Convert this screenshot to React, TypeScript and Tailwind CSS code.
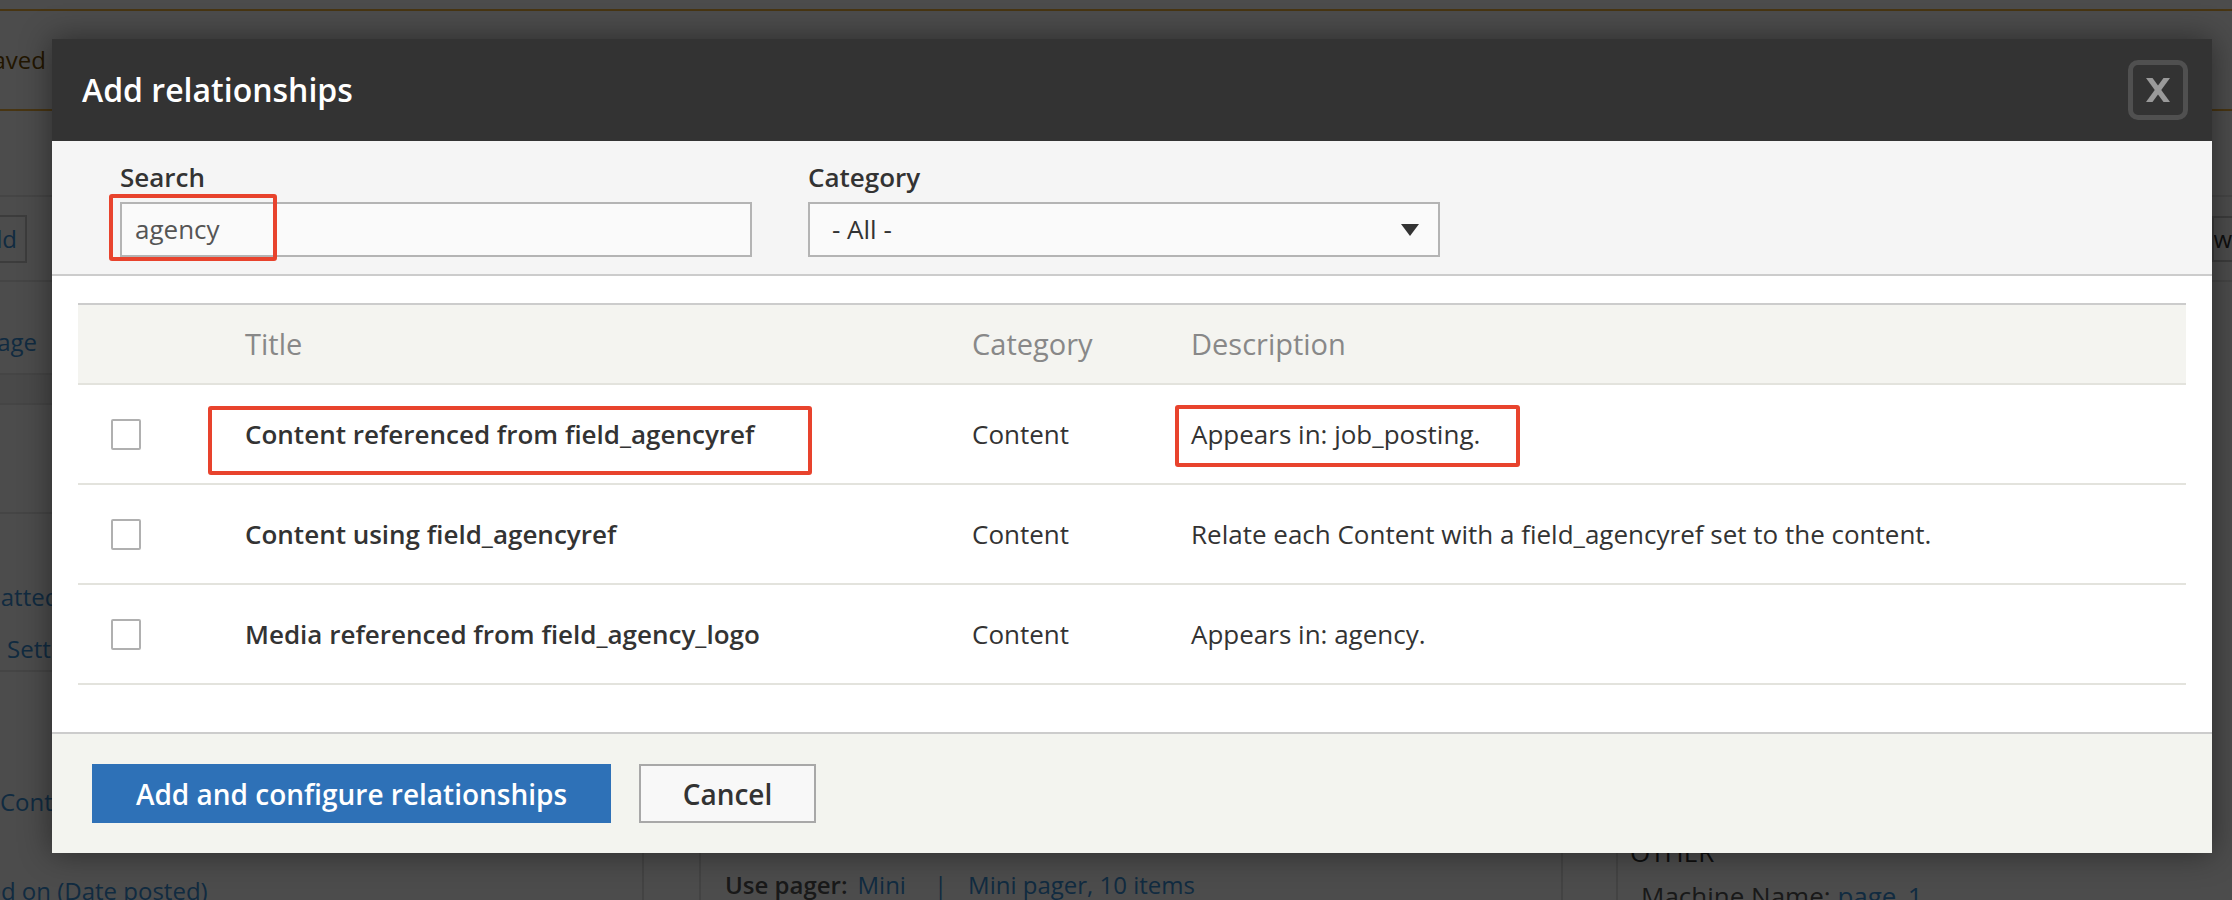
import React from "react";

function Checkbox() {
  return <div className="w-[30px] h-[31px] border-2 border-[#b0b0b0] bg-white rounded-[2px]" />;
}

function RedBox({ className }: { className: string }) {
  return <div className={"absolute border-[4px] border-[#e8432d] rounded-[3px] " + className} />;
}

function BackgroundPage() {
  return (
    <div className="flex flex-col h-full text-[#333]">
      <div className="h-[9px] shrink-0" />
      <div className="h-[102px] shrink-0 border-y-2 border-[#f2b23c] bg-white flex items-center">
        <div className="w-[46px] overflow-hidden flex justify-end shrink-0">
          <span className="whitespace-nowrap text-[24px] text-[#734c00]">been saved</span>
        </div>
      </div>
      <div className="h-[84px] shrink-0" />
      <div className="h-[87px] shrink-0 border-y-2 border-[#e6e6e6] flex items-center justify-between">
        <div className="h-[48px] w-[27px] border-2 border-l-0 border-[#c8c8c8] overflow-hidden flex justify-end items-center pr-[8px]">
          <span className="whitespace-nowrap text-[24px] text-[#3a8fd8]">Add</span>
        </div>
        <div className="h-[46px] w-[20px] border-2 border-r-0 border-[#c8c8c8] overflow-hidden flex justify-end items-center">
          <span className="whitespace-nowrap text-[24px] text-[#333]">Preview</span>
        </div>
      </div>
      <div className="flex flex-1">
        <div className="w-[644px] shrink-0 border-r-2 border-[#e0e0e0] flex flex-col text-[24px] text-[#3a8fd8]">
          <div className="h-[91px] pt-[28px] flex items-center">
            <div className="w-[37px] overflow-hidden flex justify-end">
              <span className="whitespace-nowrap">Page</span>
            </div>
          </div>
          <div className="h-[32px] border-y-2 border-[#e6e6e6] bg-[#f4f4f4]" />
          <div className="h-[109px] border-b-2 border-[#e6e6e6]" />
          <div className="h-[158px] border-b-2 border-[#e6e6e6] pt-[57px] leading-[52px]">
            <div className="whitespace-nowrap -ml-[86px]">Unformatted list</div>
            <div className="whitespace-nowrap ml-[7px]">Settings</div>
          </div>
          <div className="pt-[113px] leading-[34px]">
            <div className="whitespace-nowrap">Content: Title</div>
            <div className="whitespace-nowrap -ml-[90px] mt-[55px]">Authored on (Date posted)</div>
          </div>
        </div>
        <div className="w-[57px] shrink-0 border-r-2 border-[#e0e0e0]" />
        <div className="w-[862px] shrink-0 border-r-2 border-[#e0e0e0] pl-[24px]">
          <div className="mt-[585px] text-[24px] leading-[36px] whitespace-nowrap flex">
            <span className="text-[#555] font-semibold">Use pager:</span>
            <span className="ml-[10px] text-[#3a8fd8]">Mini</span>
            <span className="ml-[28px] text-[#3a8fd8]">|</span>
            <span className="ml-[21px] text-[#3a8fd8]">Mini pager, 10 items</span>
          </div>
        </div>
        <div className="w-[55px] shrink-0 border-r-2 border-[#e0e0e0]" />
        <div className="flex-1 pl-[12px]">
          <div className="mt-[552px] text-[26px] leading-[36px] uppercase text-[#333]">Other</div>
          <div className="mt-[8px] ml-[11px] text-[26px] leading-[36px] whitespace-nowrap">
            <span className="text-[#555]">Machine Name: </span>
            <span className="text-[#3a8fd8]">page_1</span>
          </div>
        </div>
      </div>
    </div>
  );
}

const rows = [
  { title: "Content referenced from field_agencyref", cat: "Content", desc: "Appears in: job_posting.", mark: true },
  { title: "Content using field_agencyref", cat: "Content", desc: "Relate each Content with a field_agencyref set to the content.", mark: false },
  { title: "Media referenced from field_agency_logo", cat: "Content", desc: "Appears in: agency.", mark: false },
];

function Dialog() {
  return (
    <div className="absolute left-[52px] top-[39px] w-[2160px] h-[814px] flex flex-col bg-white shadow-[0_0_30px_rgba(0,0,0,0.45)]">
      <div className="h-[102px] shrink-0 bg-[#333] flex items-center justify-between pl-[30px] pr-[24px]">
        <h2 className="text-[32px] font-semibold text-white leading-none">Add relationships</h2>
        <button className="w-[60px] h-[60px] rounded-[10px] border-[5px] border-[#505050] bg-[#333] flex items-center justify-center">
          <svg width="24" height="24" viewBox="0 0 24 24">
            <polygon points="0,0 6.5,0 24,24 17.5,24" fill="#9a9a9a" />
            <polygon points="17.5,0 24,0 6.5,24 0,24" fill="#9a9a9a" />
          </svg>
        </button>
      </div>

      <div className="h-[135px] shrink-0 bg-[#f5f5f5] border-b-2 border-[#cccccc] flex gap-[56px] pl-[68px] pt-[20px]">
        <div className="flex flex-col">
          <label className="text-[26px] font-semibold text-[#333] leading-[32px] mb-[9px]">Search</label>
          <div className="relative w-[632px] h-[55px] border-2 border-[#b4b4b4] bg-[#fafafa] flex items-center pl-[13px] text-[26px] text-[#555]">
            agency
            <RedBox className="-left-[13px] -top-[10px] w-[168px] h-[67px]" />
          </div>
        </div>
        <div className="flex flex-col">
          <label className="text-[26px] font-semibold text-[#333] leading-[32px] mb-[9px]">Category</label>
          <div className="w-[632px] h-[55px] border-2 border-[#b4b4b4] bg-[#fafafa] flex items-center justify-between pl-[22px] pr-[19px] text-[26px] text-[#333]">
            <span>- All -</span>
            <svg width="18" height="12" viewBox="0 0 18 12">
              <polygon points="0,0 18,0 9,12" fill="#333" />
            </svg>
          </div>
        </div>
      </div>

      <div className="flex-1 bg-white px-[26px] pt-[27px]">
        <div className="h-[82px] border-t-2 border-[#cccccc] border-b-2 border-b-[#e3e3dd] bg-[#f4f4f0] flex items-center text-[29px] text-[#888]">
          <div className="w-[167px] shrink-0" />
          <div className="w-[727px] shrink-0">Title</div>
          <div className="w-[219px] shrink-0">Category</div>
          <div className="flex-1">Description</div>
        </div>
        {rows.map((r, i) => (
          <div key={i} className="h-[100px] border-b-2 border-[#e3e3dd] flex text-[26px] text-[#333]">
            <div className="w-[167px] shrink-0 pl-[33px] flex items-center">
              <Checkbox />
            </div>
            <div className="w-[727px] shrink-0 relative flex items-center font-semibold">
              {r.title}
              {r.mark && <RedBox className="-left-[37px] top-[21px] w-[604px] h-[69px]" />}
            </div>
            <div className="w-[219px] shrink-0 flex items-center">{r.cat}</div>
            <div className="flex-1 relative flex items-center">
              {r.desc}
              {r.mark && <RedBox className="-left-[16px] top-[20px] w-[345px] h-[62px]" />}
            </div>
          </div>
        ))}
      </div>

      <div className="h-[121px] shrink-0 bg-[#f3f4ef] border-t-2 border-[#cccccc] flex items-center gap-[28px] pl-[40px]">
        <button className="h-[59px] w-[519px] bg-[#2e71b7] text-white text-[28px] font-semibold">Add and configure relationships</button>
        <button className="h-[59px] w-[177px] border-2 border-[#a8a8a8] bg-[#f8f8f8] text-[#333] text-[28px] font-semibold">Cancel</button>
      </div>
    </div>
  );
}

export default function App() {
  return (
    <div className="relative w-[2232px] h-[900px] overflow-hidden bg-white font-['Open_Sans',sans-serif]">
      <BackgroundPage />
      <div className="absolute inset-0 bg-black/70" />
      <Dialog />
    </div>
  );
}
